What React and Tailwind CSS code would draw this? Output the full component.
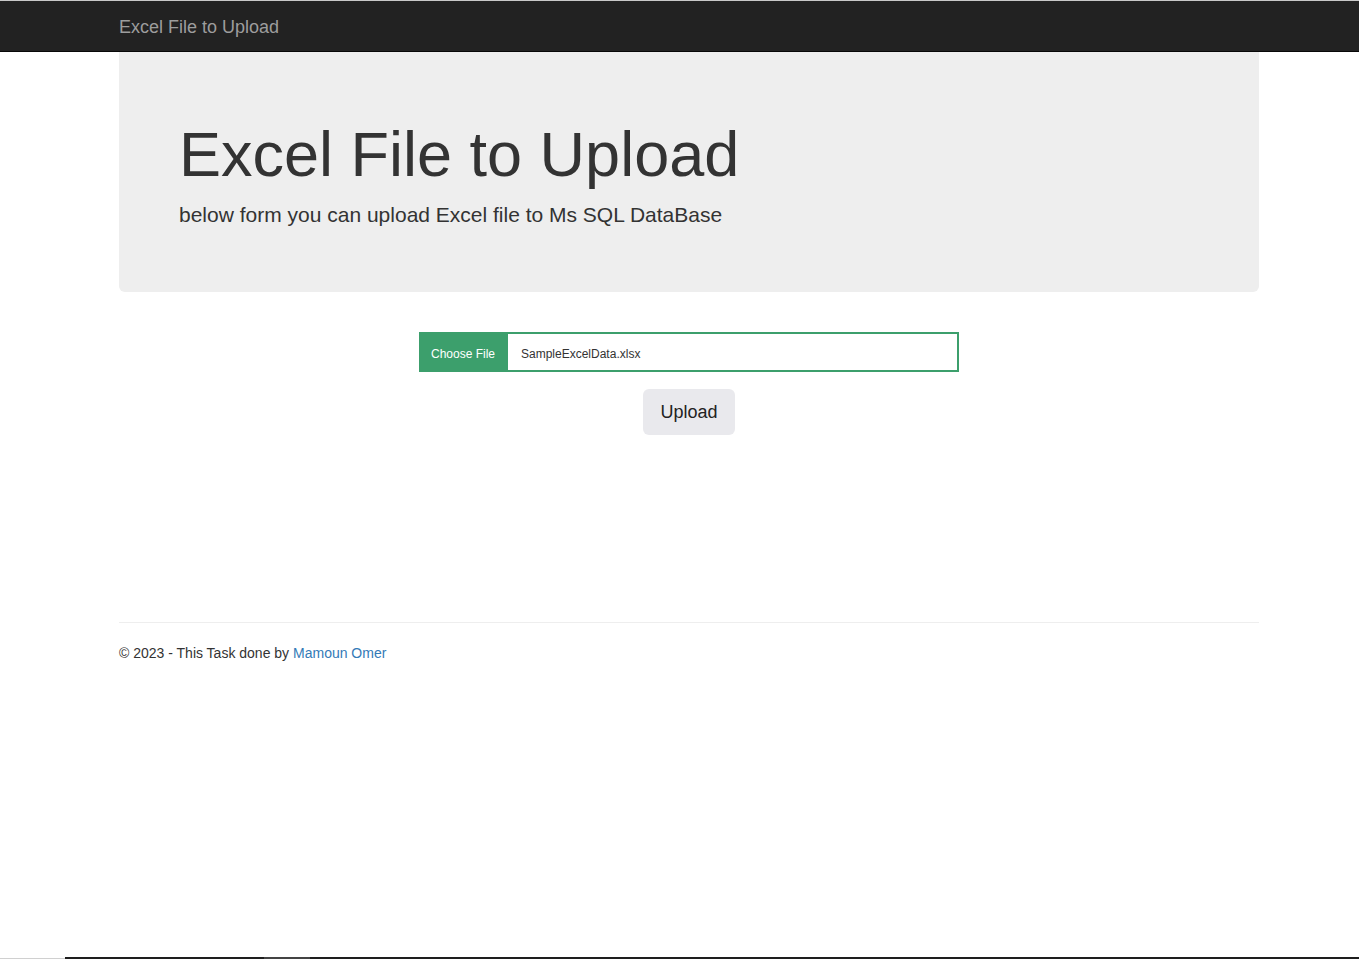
import React from 'react';

const font = { fontFamily: '"Liberation Sans", Arial, sans-serif' };

export default function App() {
  return (
    <div className="min-h-[959px] flex flex-col bg-white text-[#333] text-[14px] leading-[1.42857]" style={font}>
      {/* navbar */}
      <div className="h-px bg-[#c9c9c9]" />
      <nav className="h-[51px] bg-[#222] border-b border-[#080808]">
        <div className="ml-[104px] w-[1170px] h-[50px] flex items-center px-[15px] pt-[2px]">
          <a href="#" className="text-[18px] leading-[20px] text-[#9d9d9d] hover:text-white">Excel File to Upload</a>
        </div>
      </nav>

      {/* body */}
      <div className="ml-[119px] w-[1140px]">
        <div className="bg-[#eee] rounded-b-[6px] px-[60px] pt-[48px] pb-[48px]">
          <h1 className="mt-[20px] mb-[11px] text-[63px] leading-[1.1] font-normal">Excel File to Upload</h1>
          <p className="mb-[14px] text-[21px] leading-[30px] font-light">below form you can upload Excel file to Ms SQL DataBase</p>
        </div>

        <form className="mt-[40px] flex flex-col items-center">
          <label className="w-[540px] h-[40px] flex items-stretch border-2 border-[#3c9f6c] cursor-pointer">
            <span className="w-[89px] shrink-0 bg-[#3c9f6c] text-white text-[12px] flex items-center pl-[12px] pt-[4px] -ml-[2px] -my-[2px]">Choose File</span>
            <span className="flex items-center pl-[13px] pt-[4px] text-[12px] text-[#333]">SampleExcelData.xlsx</span>
            <input type="file" className="hidden" />
          </label>
          <button type="button" className="mt-[17px] w-[92px] h-[46px] pt-[2px] rounded-[6px] bg-[#e9e9ed] text-[18px] text-[#222]">Upload</button>
        </form>

        <hr className="mt-[187px] border-0 border-t border-[#eee]" />
        <footer className="pt-[21px]">
          <p>© 2023 - This Task done by <a href="#" className="text-[#337ab7]">Mamoun Omer</a></p>
        </footer>
      </div>

      {/* bottom edge */}
      <div className="mt-auto flex h-[2px]">
        <div className="w-[65px] bg-[#d0d0d0] h-px mt-auto" />
        <div className="w-[199px] bg-[#1e1e1e]" />
        <div className="w-[46px] bg-[#444]" />
        <div className="flex-1 bg-[#1e1e1e]" />
      </div>
    </div>
  );
}
